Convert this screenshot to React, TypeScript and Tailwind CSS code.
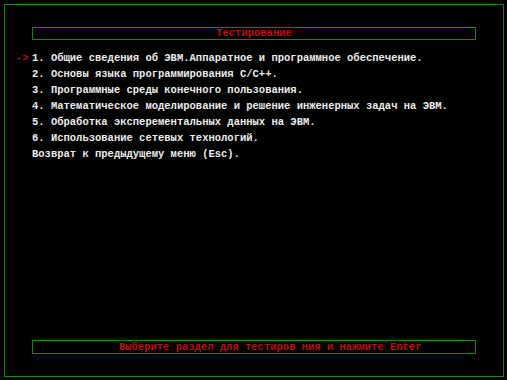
import React from 'react';

const items = [
  '1. Общие сведения об ЭВМ.Аппаратное и программное обеспечение.',
  '2. Основы языка программирования C/C++.',
  '3. Программные среды конечного пользования.',
  '4. Математическое моделирование и решение инженерных задач на ЭВМ.',
  '5. Обработка эксперементальных данных на ЭВМ.',
  '6. Использование сетевых технологий.',
  'Возврат к предыдущему меню (Esc).',
];

export default function App() {
  const selected = 0;

  return (
    <div
      className="w-[507px] h-[380px] bg-black pt-[4px] pl-[4px] overflow-hidden"
      style={{ fontFamily: '"Liberation Mono", "DejaVu Sans Mono", monospace' }}
    >
      <div className="w-[500px] h-[373px] border border-[#0f8a0f] flex flex-col">
        {/* заголовок */}
        <div className="ml-[27px] mt-[22px] w-[444px] h-[13px] border border-[#0f8a0f] flex items-center justify-center">
          <span className="text-[10.5px] leading-none font-bold text-[#b81010]">Тестирование</span>
        </div>

        <ul className="mt-[10px] flex flex-col">
          {items.map((item, i) => (
            <li key={i} className="h-[16px] flex items-center text-[10.5px] leading-none font-bold text-[#ececec] whitespace-pre">
              <span className="w-[27px] pl-[11px] text-[#b81010]">{i === selected ? '->' : ''}</span>
              <span>{item}</span>
            </li>
          ))}
        </ul>

        <div className="mt-auto mb-[22px] ml-[27px] w-[444px] h-[14px] border border-[#0f8a0f] flex items-center pl-[86px]">
          <span className="text-[10.5px] leading-none font-bold text-[#b81010] whitespace-pre">
            Выберите раздел для тестиров ния и нажмите Enter
          </span>
        </div>
      </div>
    </div>
  );
}
